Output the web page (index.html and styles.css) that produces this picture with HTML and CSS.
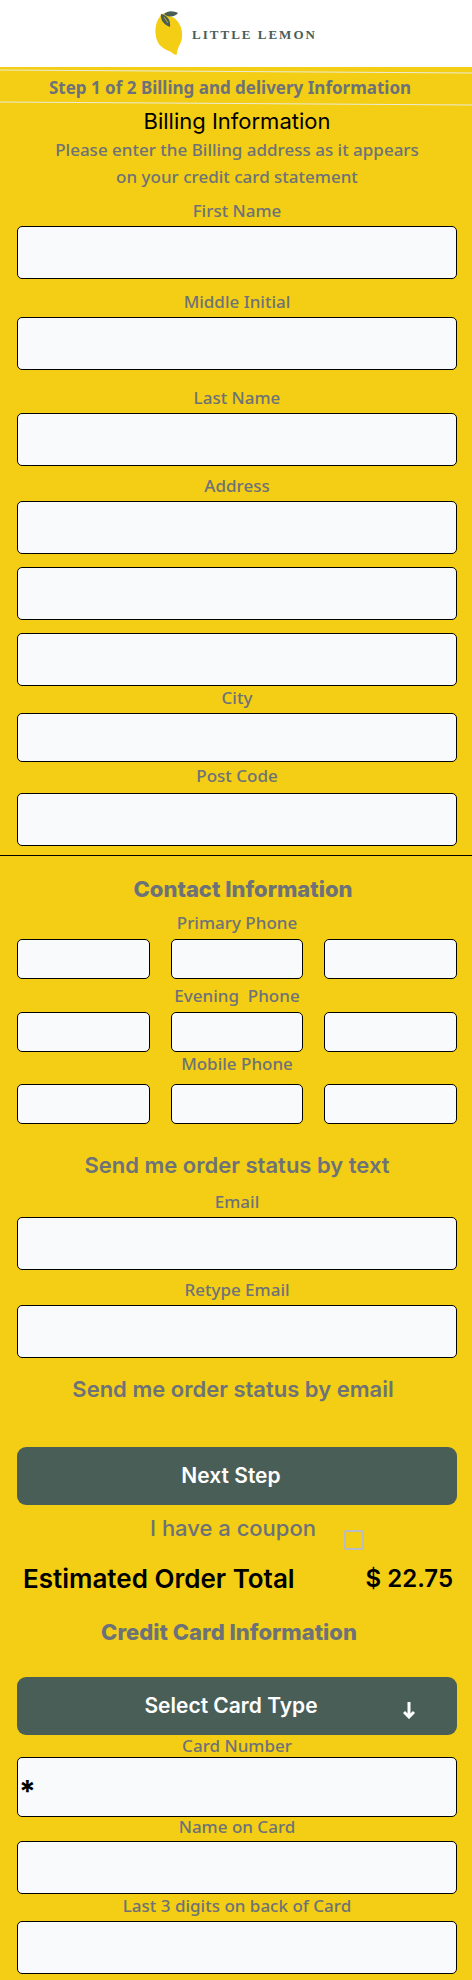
FILE: index.html
```html
<!DOCTYPE html>
<html lang="en">
<head>
<meta charset="utf-8">
<meta name="viewport" content="width=device-width, initial-scale=1">
<title>Little Lemon - Billing</title>
<link rel="stylesheet" href="styles.css">
</head>
<body>
<header class="site-header">
  <svg class="logo-mark" viewBox="0 0 28 44" aria-hidden="true">
    <path fill="#f4ce14" d="M6 4C2 9 0 15 .5 22C1 32 6 37 14 40C17 41 19 44 21.500 44C22 41 22.500 38 24 35C27 30 27.500 26 27 21C26 13 21 6 14 5C11 2 8 2 6 4Z"/>
    <path fill="#495e57" d="M9 3C13-1 19 0 23 2C20 6 14 7 9 3Z"/>
    <path fill="#495e57" d="M6 3C12 4 16 9 15 16C9 14 5 9 6 3Z"/>
    <path fill="none" stroke="#f4ce14" stroke-width=".7" d="M9 6L13 12"/>
  </svg>
  <span class="logo-text">LITTLE LEMON</span>
</header>
<form class="checkout">
  <div class="step">
    <svg class="slant" viewBox="0 0 472 5" preserveAspectRatio="none" aria-hidden="true"><path d="M0 1L472 4"/></svg>
    <p class="step-text">Step 1 of 2 Billing and delivery Information</p>
    <svg class="slant" viewBox="0 0 472 5" preserveAspectRatio="none" aria-hidden="true"><path d="M0 1L472 4"/></svg>
  </div>

  <section class="panel billing">
    <h1 class="title">Billing Information</h1>
    <p class="intro">Please enter the Billing address as it appears<br>on your credit card statement</p>
    <div class="field"><label for="first">First Name</label><input id="first" type="text"></div>
    <div class="field"><label for="middle">Middle Initial</label><input id="middle" type="text"></div>
    <div class="field space-l"><label for="last">Last Name</label><input id="last" type="text"></div>
    <div class="field space-s"><label for="addr1">Address</label>
      <div class="stack">
        <input id="addr1" type="text">
        <input type="text" aria-label="Address line 2">
        <input type="text" aria-label="Address line 3">
      </div>
    </div>
    <div class="field space-none short"><label for="city">City</label><input id="city" type="text"></div>
    <div class="field space-xs roomy"><label for="post">Post Code</label><input id="post" type="text"></div>
  </section>

  <section class="panel contact">
    <h2 class="heading heading-right">Contact Information</h2>
    <fieldset class="phone"><legend>Primary Phone</legend>
      <div class="parts"><input type="tel" aria-label="Primary area code"><input type="tel" aria-label="Primary prefix"><input type="tel" aria-label="Primary number"></div>
    </fieldset>
    <fieldset class="phone space-phone"><legend>Evening&nbsp; Phone</legend>
      <div class="parts"><input type="tel" aria-label="Evening area code"><input type="tel" aria-label="Evening prefix"><input type="tel" aria-label="Evening number"></div>
    </fieldset>
    <fieldset class="phone roomy"><legend>Mobile Phone</legend>
      <div class="parts"><input type="tel" aria-label="Mobile area code"><input type="tel" aria-label="Mobile prefix"><input type="tel" aria-label="Mobile number"></div>
    </fieldset>
    <p class="notice notice-text">Send me order status by text</p>
    <div class="field"><label for="email">Email</label><input id="email" type="email"></div>
    <div class="field space-s"><label for="email2">Retype Email</label><input id="email2" type="email"></div>
    <p class="notice notice-email">Send me order status by email</p>
  </section>

  <section class="panel summary">
    <button class="next" type="button">Next Step</button>
    <div class="coupon"><label for="coupon">I have a coupon</label><input id="coupon" type="checkbox"></div>
    <div class="total"><span>Estimated Order Total</span><span class="amount">$ 22.75</span></div>
  </section>

  <section class="panel card">
    <h2 class="heading heading-left">Credit Card Information</h2>
    <div class="select-wrap">
      <select class="card-type" aria-label="Card type"><option>Select Card Type</option></select>
      <svg class="arrow" viewBox="0 0 12 18" aria-hidden="true"><path d="M6 1V16M1 11L6 16L11 11"/></svg>
    </div>
    <div class="field tight number"><label for="number">Card Number</label><input id="number" type="text" value="*"></div>
    <div class="field tight holder"><label for="holder">Name on Card</label><input id="holder" type="text"></div>
    <div class="field tight cvv"><label for="cvv">Last 3 digits on back of Card</label><input id="cvv" type="text"></div>
  </section>
</form>
</body>
</html>
```
FILE: styles.css
```css
* { box-sizing: border-box; }
body {
  margin: 0;
  background: #f4ce14;
  color: #6d7278;
  font: 500 17px/24px "Noto Sans", sans-serif;
}
h1, h2, p { margin: 0; }
.site-header {
  display: flex;
  align-items: flex-start;
  justify-content: center;
  gap: 9px;
  height: 67px;
  padding: 11px 0 0 0;
  background: #fff;
}
.logo-mark { width: 28px; height: 44px; }
.logo-text {
  padding-top: 12px;
  color: #495e57;
  font: bold 13px/24px "Liberation Serif", serif;
  letter-spacing: 2px;
}
.step { padding-top: 2px; }
.slant { display: block; width: 100%; height: 5px; }
.slant path { fill: none; stroke: #ececd8; stroke-width: 1; }
.step-text {
  padding: 2px 12px 1px 0;
  text-align: center;
  font-weight: 700;
}
.panel { padding: 0 15px 0 17px; }
.title {
  padding-top: 1px;
  color: #000;
  text-align: center;
  font: 400 22px/28px Inter, sans-serif;
}
.intro { padding-top: 1px; line-height: 27px; text-align: center; }
.field { display: flex; flex-direction: column; gap: 3px; margin-top: 11px; text-align: center; }
.field label, .phone legend { align-self: center; }
.intro + .field { margin-top: 9px; }
.space-l { margin-top: 16px; }
.space-s { margin-top: 8px; }
.space-xs { margin-top: 2px; }
.space-none { margin-top: 0; }
.field.roomy { gap: 5px; }
.stack { display: flex; flex-direction: column; gap: 13px; }
input[type="text"], input[type="email"], input[type="tel"] {
  width: 100%;
  min-width: 0;
  height: 53px;
  margin: 0;
  padding: 0 1px;
  border: 1px solid #000;
  border-radius: 5px;
  background: #f9fafc;
  color: #000;
  font: 700 30px/36px Inter, sans-serif;
}
.short input[type="text"] { height: 49px; }
.billing { padding-bottom: 9px; border-bottom: 1px solid #000; }
.heading { text-align: center; font: 800 22px/28px Inter, sans-serif; }
.heading-right { padding: 19px 0 0 12px; }
.phone { min-width: 0; margin: 8px 0 0; padding: 0; border: 0; }
.phone legend { margin: 0 auto; padding: 0 0 4px; }
.space-phone { margin-top: 5px; }
.parts { display: grid; grid-template-columns: repeat(3, 1fr); gap: 21px; }
.parts input[type="tel"] { height: 40px; }
.phone.roomy { margin-top: 0; }
.phone.roomy legend { padding-bottom: 8px; }
.notice { text-align: center; font: 600 22px/28px Inter, sans-serif; }
.notice-text { padding-top: 27px; }
.notice-email { padding: 17px 8px 0 0; }
.summary { padding-top: 44px; }
.next, .card-type {
  display: block;
  width: 100%;
  height: 58px;
  border: 0;
  border-radius: 9px;
  background: #495e57;
  color: #fff;
  text-align: center;
  text-align-last: center;
  font: 600 21px/28px Inter, sans-serif;
}
.next { padding: 0 12px 0 0; }
.coupon {
  display: flex;
  justify-content: center;
  align-items: flex-end;
  gap: 28px;
  padding: 9px 0 0 40px;
  font: 500 22px/28px Inter, sans-serif;
}
.coupon label { padding-bottom: 8px; }
.coupon input {
  appearance: none;
  width: 20px;
  height: 20px;
  margin: 0;
  border: 2px solid #b9bcc4;
  border-radius: 2px;
}
.total {
  display: flex;
  justify-content: space-between;
  padding: 13px 4px 0 6px;
  color: #000;
  font: 600 26px/32px Inter, sans-serif;
}
.amount { font-size: 24px; }
.heading-left { padding: 23px 16px 0 0; }
.select-wrap { position: relative; margin-top: 31px; }
.card-type { appearance: none; padding: 0 12px 0 0; }
.arrow {
  position: absolute;
  top: 24px;
  right: 42px;
  width: 12px;
  height: 18px;
  pointer-events: none;
}
.arrow path { fill: none; stroke: #fff; stroke-width: 3; }
.field.tight { margin-top: 0; gap: 4px; }
.field.number { gap: 0; line-height: 22px; }
.number input[type="text"] { height: 60px; padding-top: 8px; }
.holder { line-height: 20px; }
.field.cvv { gap: 3px; }
```
